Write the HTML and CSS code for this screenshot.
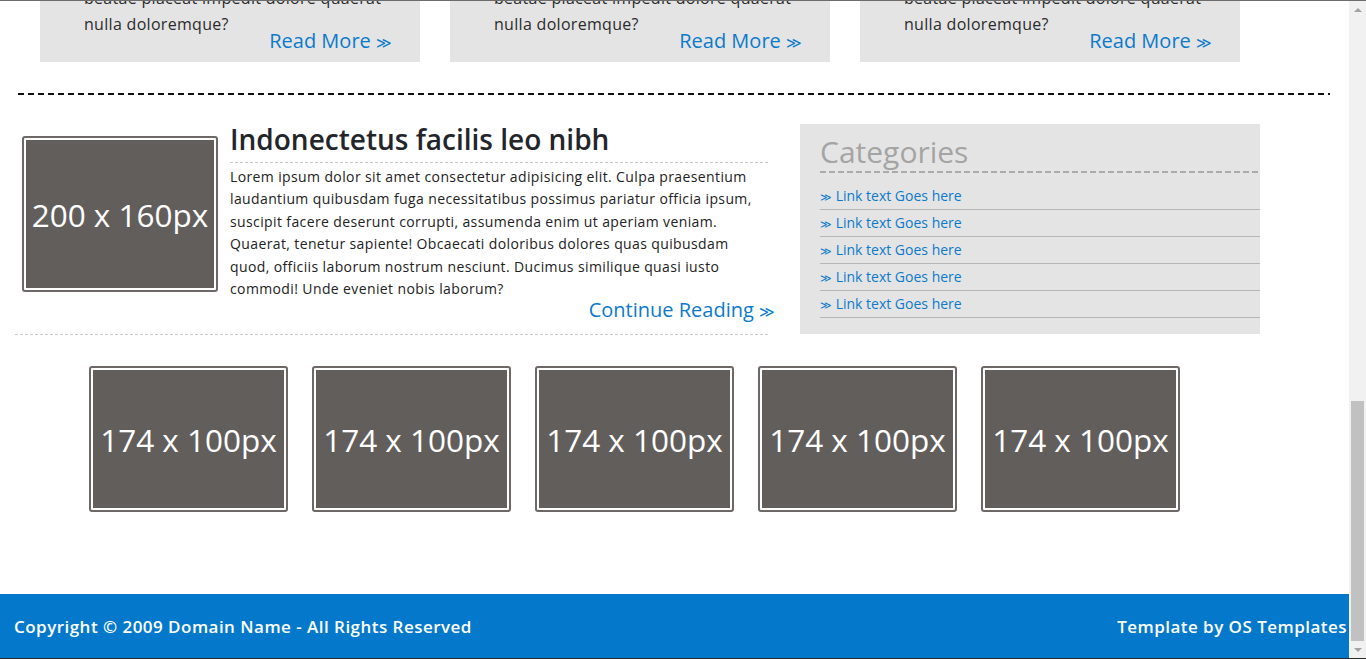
FILE: index.html
```html
<!DOCTYPE html>
<html lang="en">
<head>
<meta charset="utf-8">
<title>Template</title>
<link rel="stylesheet" href="styles.css">
</head>
<body>
<div class="screen">
  <div class="page">
    <div class="cards">
      <div class="card">
        <p class="card-text">beatae placeat impedit dolore quaerat<br>nulla doloremque?</p>
        <a class="more" href="#">Read More <span class="chev">≫</span></a>
      </div>
      <div class="card">
        <p class="card-text">beatae placeat impedit dolore quaerat<br>nulla doloremque?</p>
        <a class="more" href="#">Read More <span class="chev">≫</span></a>
      </div>
      <div class="card">
        <p class="card-text">beatae placeat impedit dolore quaerat<br>nulla doloremque?</p>
        <a class="more" href="#">Read More <span class="chev">≫</span></a>
      </div>
    </div>

    <div class="rule"></div>

    <div class="main">
      <div class="article">
        <div class="ph ph-large"><span>200 x 160px</span></div>
        <div class="article-body">
          <h2 class="article-title">Indonectetus facilis leo nibh</h2>
          <p class="article-text">Lorem ipsum dolor sit amet consectetur adipisicing elit. Culpa praesentium<br>laudantium quibusdam fuga necessitatibus possimus pariatur officia ipsum,<br>suscipit facere deserunt corrupti, assumenda enim ut aperiam veniam.<br>Quaerat, tenetur sapiente! Obcaecati doloribus dolores quas quibusdam<br>quod, officiis laborum nostrum nesciunt. Ducimus similique quasi iusto<br>commodi! Unde eveniet nobis laborum?</p>
          <a class="continue" href="#">Continue Reading <span class="chev">≫</span></a>
        </div>
      </div>

      <div class="categories">
        <h3 class="cat-title">Categories</h3>
        <ul class="cat-list">
          <li><a href="#"><span class="chev">≫</span> Link text Goes here</a></li>
          <li><a href="#"><span class="chev">≫</span> Link text Goes here</a></li>
          <li><a href="#"><span class="chev">≫</span> Link text Goes here</a></li>
          <li><a href="#"><span class="chev">≫</span> Link text Goes here</a></li>
          <li><a href="#"><span class="chev">≫</span> Link text Goes here</a></li>
        </ul>
      </div>
    </div>

    <div class="thumbs">
      <div class="ph ph-thumb"><span>174 x 100px</span></div>
      <div class="ph ph-thumb"><span>174 x 100px</span></div>
      <div class="ph ph-thumb"><span>174 x 100px</span></div>
      <div class="ph ph-thumb"><span>174 x 100px</span></div>
      <div class="ph ph-thumb"><span>174 x 100px</span></div>
    </div>

    <footer class="footer">
      <span>Copyright © 2009 Domain Name - All Rights Reserved</span>
      <span>Template by OS Templates</span>
    </footer>
  </div>

  <div class="scrollbar">
    <div class="sb-btn"><span class="arrow-up"></span></div>
    <div class="sb-track"><div class="sb-thumb"></div></div>
    <div class="sb-btn"><span class="arrow-down"></span></div>
  </div>
</div>
</body>
</html>
```

FILE: styles.css
```css
* { box-sizing: border-box; }

html, body {
  margin: 0;
  padding: 0;
  height: 100%;
  overflow: hidden;
  background: #ffffff;
}

body {
  font-family: "Open Sans", "DejaVu Sans", sans-serif;
  color: #26272b;
}

a { text-decoration: none; }

.chev {
  font-family: "DejaVu Sans", sans-serif;
  font-weight: 300;
  letter-spacing: 0;
  line-height: 0;
}

.screen {
  display: flex;
  height: 659px;
  border-top: 1px solid #6c6c6c;
  border-bottom: 1px solid #2e2a26;
}

.page {
  flex: 1;
  display: flex;
  flex-direction: column;
  overflow: hidden;
  min-width: 0;
}

/* cards (cut at top) */
.cards {
  display: flex;
  gap: 30px;
  margin: -16px 0 0 40px;
  flex-shrink: 0;
}

.card {
  width: 380px;
  background: #e4e4e4;
  padding: 0 28px 11px 44px;
  display: flex;
  flex-direction: column;
}

.card-text {
  margin: 0;
  font-size: 16px;
  line-height: 26px;
  letter-spacing: 0.3px;
  color: #2b2b2b;
}

.more {
  align-self: flex-end;
  margin-top: -6px;
  font-size: 20px;
  line-height: 20px;
  height: 20px;
  color: #0b7acb;
}

.more .chev { font-size: 15px; }

.rule {
  flex-shrink: 0;
  height: 2px;
  width: 1312px;
  margin: 31px 0 0 18px;
  background: repeating-linear-gradient(to right, #111 0 6px, transparent 6px 10px);
}

/* main */
.main {
  display: flex;
  align-items: flex-start;
  gap: 30px;
  margin: 29px 0 0 15px;
  flex-shrink: 0;
}

.article {
  width: 755px;
  display: flex;
  gap: 12px;
  padding: 0 0 13px 7px;
  background-image: repeating-linear-gradient(to right, #c8c8c8 0 3px, transparent 3px 5px);
  background-size: 100% 1px;
  background-position: bottom left;
  background-repeat: no-repeat;
}

.ph {
  flex-shrink: 0;
  display: flex;
  align-items: center;
  justify-content: center;
  border: 2px solid #6d6866;
  border-radius: 3px;
  padding: 2px;
  background: #625e5c;
  background-clip: content-box;
  box-shadow: inset 0 0 0 2px #fff;
  color: #ffffff;
  font-size: 31.5px;
  font-weight: 400;
  white-space: nowrap;
}

.ph-large {
  width: 196px;
  height: 156px;
  margin-top: 12px;
}

.ph-thumb {
  width: 199px;
  height: 146px;
}

.article-body {
  flex: 1;
  display: flex;
  flex-direction: column;
  min-width: 0;
}

.article-title {
  margin: 0;
  font-size: 28px;
  font-weight: 600;
  line-height: 30px;
  color: #23252b;
  padding-bottom: 8px;
  background-image: repeating-linear-gradient(to right, #c8c8c8 0 3px, transparent 3px 5px);
  background-size: 100% 1px;
  background-position: bottom left;
  background-repeat: no-repeat;
  height: 39px;
  white-space: nowrap;
}

.article-text {
  margin: 3px 0 0;
  font-size: 14px;
  line-height: 22.4px;
  letter-spacing: 0.38px;
  color: #222;
  white-space: nowrap;
}

.continue {
  align-self: flex-end;
  margin: -2px -5px 0 0;
  font-size: 20px;
  line-height: 24px;
  height: 24px;
  color: #0b7acb;
}

.continue .chev { font-size: 15px; }

/* categories */
.categories {
  width: 460px;
  background: #e4e4e4;
  padding: 9px 0 16px 20px;
}

.cat-title {
  margin: 0;
  font-size: 30px;
  font-weight: 400;
  line-height: 38px;
  color: #a4a4a4;
  padding-bottom: 2px;
  background-image: repeating-linear-gradient(to right, #ababab 0 6px, transparent 6px 9px);
  background-size: 100% 2px;
  background-position: bottom left;
  background-repeat: no-repeat;
  height: 40px;
}

.cat-list {
  list-style: none;
  margin: 10px 0 0;
  padding: 0;
}

.cat-list li {
  height: 27px;
  border-bottom: 1px solid #b6b6b6;
  font-size: 14px;
  line-height: 26px;
}

.cat-list a { color: #0b7acb; }

.cat-list .chev { font-size: 11px; }

/* thumbs */
.thumbs {
  display: flex;
  gap: 24px;
  margin: 31px 0 0 89px;
  flex-shrink: 0;
}

/* footer */
.footer {
  margin-top: auto;
  flex-shrink: 0;
  height: 64px;
  background: #0479cc;
  color: #ffffff;
  display: flex;
  justify-content: space-between;
  align-items: flex-start;
  padding: 21px 2px 0 14px;
  font-size: 17px;
  font-weight: 600;
  line-height: 23px;
  letter-spacing: 0.47px;
  white-space: nowrap;
}

/* fake scrollbar */
.scrollbar {
  width: 17px;
  flex-shrink: 0;
  background: #f1f1f1;
  display: flex;
  flex-direction: column;
}

.sb-btn {
  height: 17px;
  display: flex;
  align-items: center;
  justify-content: center;
  flex-shrink: 0;
}

.arrow-up {
  width: 0;
  height: 0;
  border-left: 4px solid transparent;
  border-right: 4px solid transparent;
  border-bottom: 4px solid #a3a3a3;
}

.arrow-down {
  width: 0;
  height: 0;
  border-left: 4px solid transparent;
  border-right: 4px solid transparent;
  border-top: 4px solid #a3a3a3;
}

.sb-track {
  flex: 1;
  display: flex;
  flex-direction: column;
  justify-content: flex-end;
  padding: 0 2px;
}

.sb-thumb {
  height: 240px;
  background: #c1c1c1;
}
```
